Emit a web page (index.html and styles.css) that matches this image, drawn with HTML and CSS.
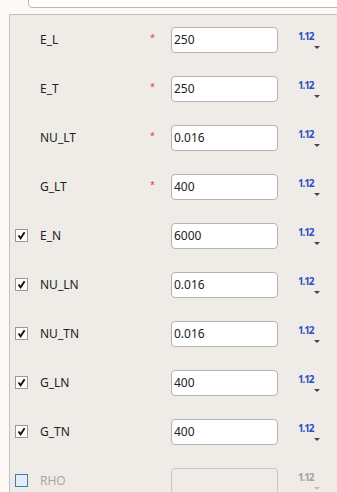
FILE: index.html
```html
<!DOCTYPE html>
<html lang="en">
<head>
    <meta charset="UTF-8">
    <meta name="viewport" content="width=device-width, initial-scale=1.0">
    <title>Material Properties</title>
    <link rel="stylesheet" href="styles.css">
</head>
<body>

    <div class="top-bar">
        <span class="top-dot"></span>
        <input type="text" class="top-input">
    </div>

    <div class="panel">
        <div class="row">
            <span class="check-cell"></span>
            <label class="name">E_L</label>
            <span class="star">*</span>
            <input type="text" class="value" value="250">
            <span class="unit">1.12<i class="arrow"></i></span>
        </div>
        <div class="row">
            <span class="check-cell"></span>
            <label class="name">E_T</label>
            <span class="star">*</span>
            <input type="text" class="value" value="250">
            <span class="unit">1.12<i class="arrow"></i></span>
        </div>
        <div class="row">
            <span class="check-cell"></span>
            <label class="name">NU_LT</label>
            <span class="star">*</span>
            <input type="text" class="value" value="0.016">
            <span class="unit">1.12<i class="arrow"></i></span>
        </div>
        <div class="row">
            <span class="check-cell"></span>
            <label class="name">G_LT</label>
            <span class="star">*</span>
            <input type="text" class="value" value="400">
            <span class="unit">1.12<i class="arrow"></i></span>
        </div>
        <div class="row">
            <span class="check-cell"><span class="box"><svg viewBox="0 0 11 11"><path d="M2.5 5.5 L4.6 8.3 L8.6 2.2"/></svg></span></span>
            <label class="name">E_N</label>
            <span class="star"></span>
            <input type="text" class="value" value="6000">
            <span class="unit">1.12<i class="arrow"></i></span>
        </div>
        <div class="row">
            <span class="check-cell"><span class="box"><svg viewBox="0 0 11 11"><path d="M2.5 5.5 L4.6 8.3 L8.6 2.2"/></svg></span></span>
            <label class="name">NU_LN</label>
            <span class="star"></span>
            <input type="text" class="value" value="0.016">
            <span class="unit">1.12<i class="arrow"></i></span>
        </div>
        <div class="row">
            <span class="check-cell"><span class="box"><svg viewBox="0 0 11 11"><path d="M2.5 5.5 L4.6 8.3 L8.6 2.2"/></svg></span></span>
            <label class="name">NU_TN</label>
            <span class="star"></span>
            <input type="text" class="value" value="0.016">
            <span class="unit">1.12<i class="arrow"></i></span>
        </div>
        <div class="row">
            <span class="check-cell"><span class="box"><svg viewBox="0 0 11 11"><path d="M2.5 5.5 L4.6 8.3 L8.6 2.2"/></svg></span></span>
            <label class="name">G_LN</label>
            <span class="star"></span>
            <input type="text" class="value" value="400">
            <span class="unit">1.12<i class="arrow"></i></span>
        </div>
        <div class="row">
            <span class="check-cell"><span class="box"><svg viewBox="0 0 11 11"><path d="M2.5 5.5 L4.6 8.3 L8.6 2.2"/></svg></span></span>
            <label class="name">G_TN</label>
            <span class="star"></span>
            <input type="text" class="value" value="400">
            <span class="unit">1.12<i class="arrow"></i></span>
        </div>
        <div class="row disabled">
            <span class="check-cell"><span class="box empty"></span></span>
            <label class="name">RHO</label>
            <span class="star"></span>
            <input type="text" class="value" value="" disabled>
            <span class="unit">1.12<i class="arrow"></i></span>
        </div>
    </div>

</body>
</html>
```

FILE: styles.css
```css
html, body {
    margin: 0;
    padding: 0;
    height: 100%;
    overflow: hidden;
}
body {
    font-family: "Noto Sans", "Open Sans", sans-serif;
    font-size: 12px;
    color: #222;
    background-color: #fcf9f6;
}
.top-bar {
    display: flex;
    align-items: flex-end;
    height: 8px;
    margin-bottom: 6px;
}
.top-dot {
    width: 4px;
    height: 3px;
    margin-left: 21px;
    margin-bottom: 5px;
    background-color: #2a6fe0;
    border-radius: 0 0 3px 3px;
}
.top-input {
    width: 320px;
    height: 26px;
    margin-left: 7px;
    box-sizing: border-box;
    border: 1px solid #b8b6b3;
    border-radius: 4px;
    background-color: #fff;
    flex-shrink: 0;
}
.panel {
    margin-left: 9px;
    width: 340px;
    border-top: 1px solid #c3c1bf;
    border-left: 1px solid #c3c1bf;
    background-color: #efece8;
}
.row {
    display: flex;
    align-items: center;
    height: 49px;
}
.check-cell {
    display: flex;
    align-items: center;
    width: 30px;
    padding-left: 5px;
    box-sizing: border-box;
}
.box {
    width: 13px;
    height: 13px;
    box-sizing: border-box;
    border: 1px solid #9a9896;
    background-color: #fff;
    display: flex;
    align-items: center;
    justify-content: center;
}
.box svg {
    width: 11px;
    height: 11px;
}
.box path {
    fill: none;
    stroke: #111;
    stroke-width: 1.9;
}
.box.empty {
    border-color: #4579ad;
    background-color: #e3edf7;
}
.name {
    width: 108px;
}
.star {
    width: 23px;
    padding-left: 2px;
    box-sizing: border-box;
    align-self: center;
    margin-top: -5px;
    font-size: 9px;
    color: #e8333a;
}
.value {
    width: 107px;
    height: 26px;
    box-sizing: border-box;
    padding: 0 2px;
    border: 1px solid #b5b3b0;
    border-radius: 4px;
    background-color: #fff;
    font-family: "Noto Sans", "Open Sans", sans-serif;
    font-size: 12px;
    color: #222;
    outline: none;
}
.unit {
    position: relative;
    margin-left: 20px;
    margin-top: -7px;
    font-size: 10px;
    font-weight: bold;
    letter-spacing: -1.2px;
    color: #2f4fc2;
}
.arrow {
    position: absolute;
    left: 16px;
    top: 17px;
    width: 0;
    height: 0;
    border-left: 3px solid transparent;
    border-right: 3px solid transparent;
    border-top: 3px solid #444;
}
.disabled .name {
    color: #aaa8a6;
}
.disabled .value {
    background-color: #efece8;
    border-color: #c8c6c3;
}
.disabled .unit {
    color: #a3a1a0;
}
.disabled .arrow {
    border-top-color: #c0bebc;
}
```
